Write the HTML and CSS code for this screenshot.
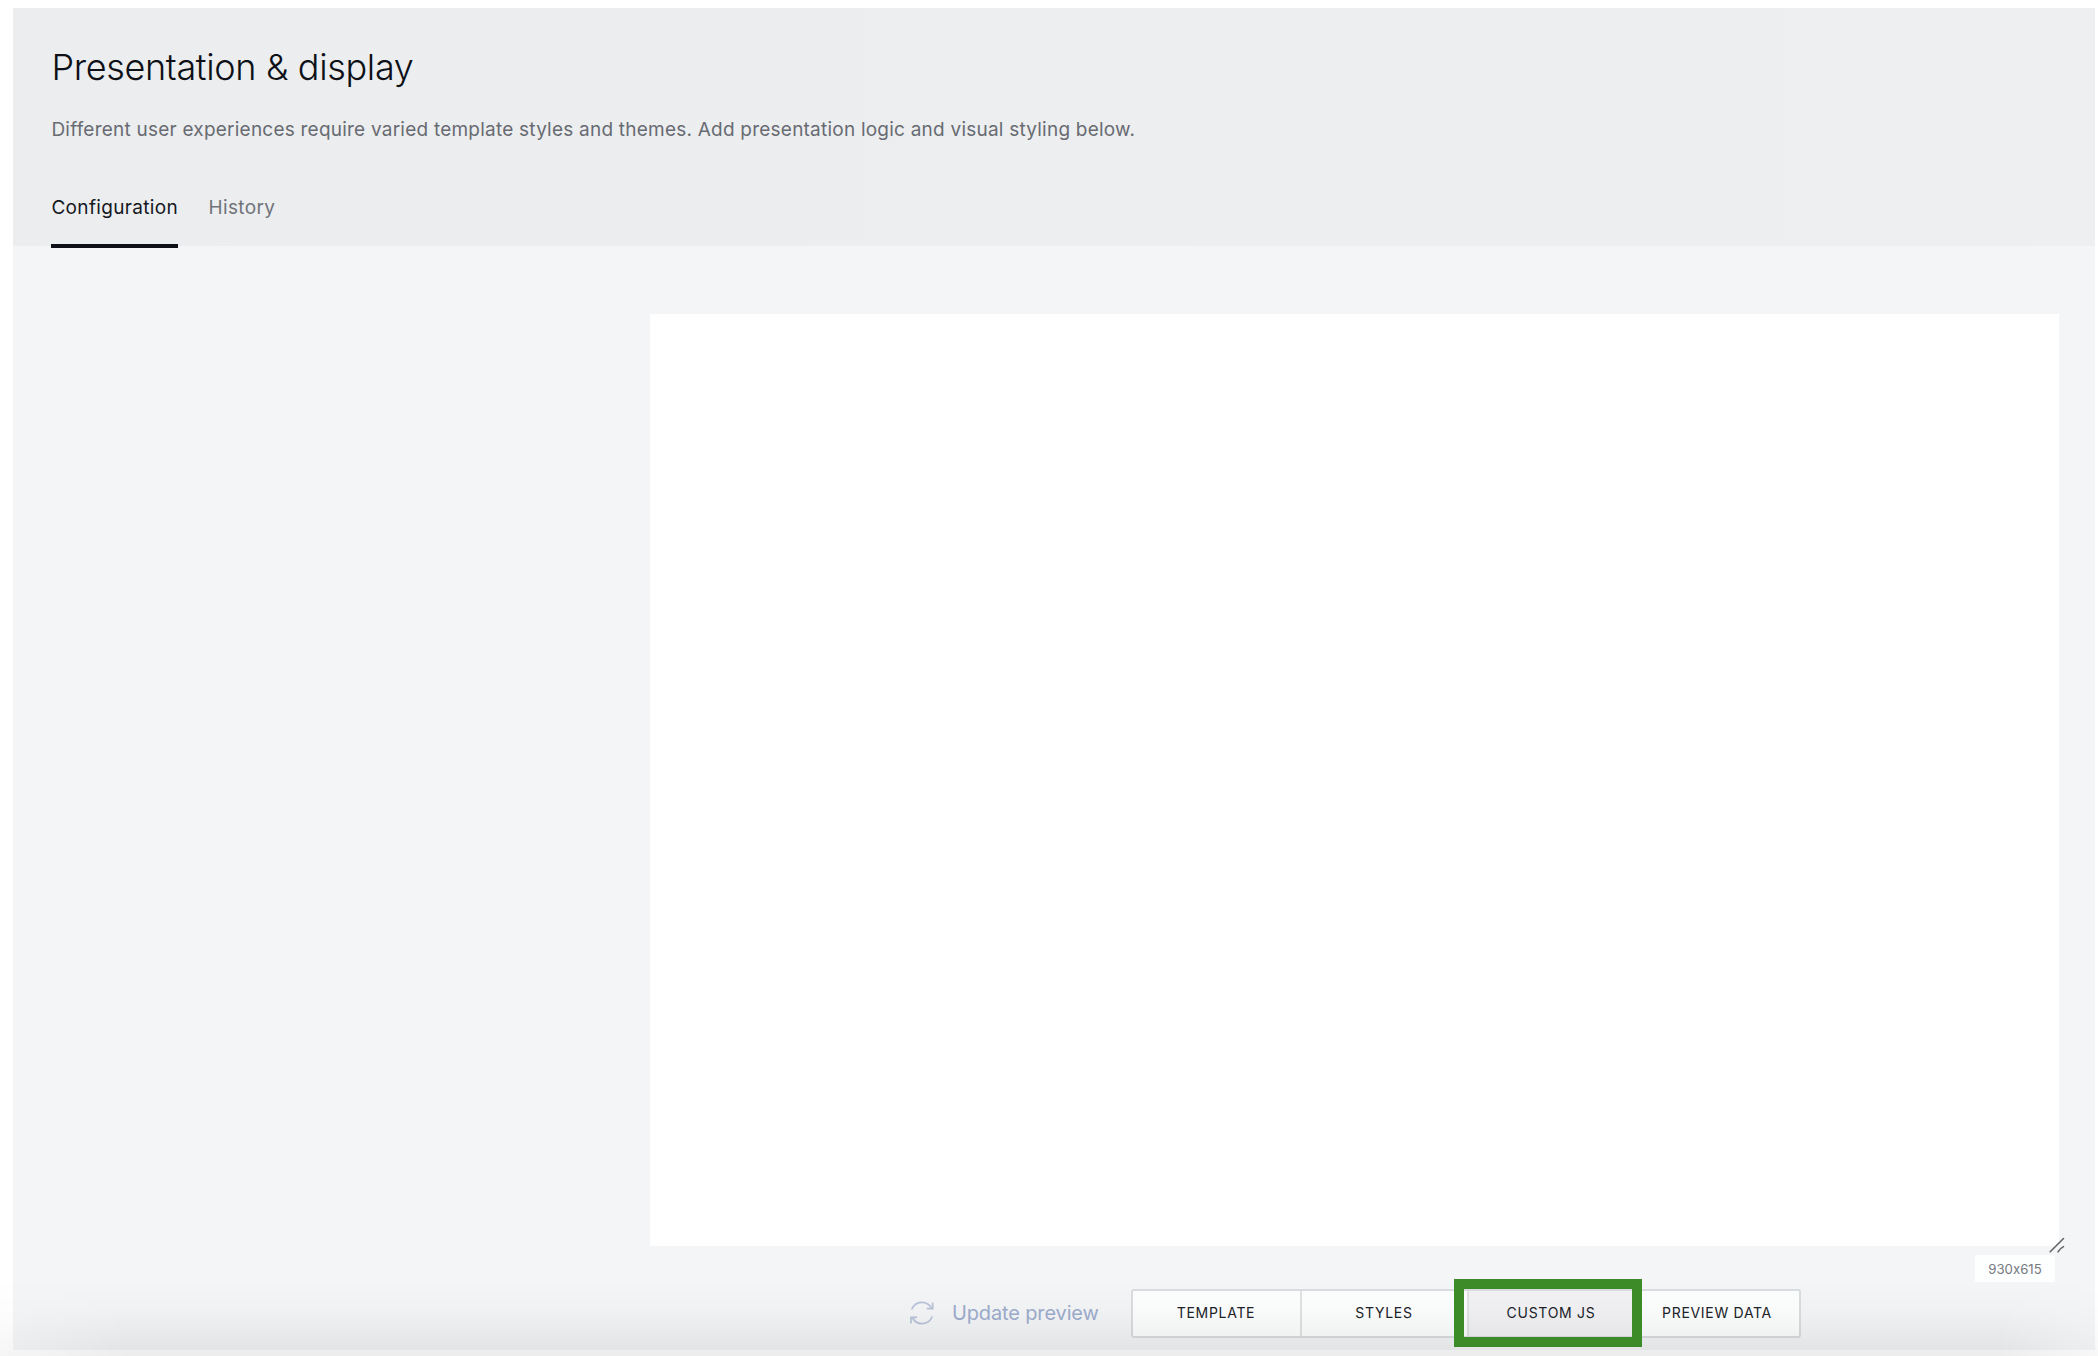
FILE: index.html
```html
<!DOCTYPE html>
<html lang="en">
<head>
<meta charset="utf-8">
<title>Presentation &amp; display</title>
<link rel="stylesheet" href="styles.css">
</head>
<body>
<main class="panel">
  <header class="header">
    <h1 class="title">Presentation &amp; display</h1>
    <p class="lead">Different user experiences require varied template styles and themes. Add presentation logic and visual styling below.</p>
    <nav class="tabs">
      <a class="tab tab-active">Configuration</a>
      <a class="tab">History</a>
    </nav>
  </header>
  <section class="workspace">
    <div class="preview">
      <svg class="resize" width="16" height="16" viewBox="0 0 16 16" fill="none" stroke="#666" stroke-width="1.6" stroke-linecap="round"><path d="M1.2 14.8 14.5 1.5M9 14.8c1.5-2.5 3-4 5.5-5.2"/></svg>
    </div>
    <div class="size">930x615</div>
    <div class="toolbar">
      <button class="update">
        <svg width="24" height="24" viewBox="0 0 24 24" fill="none" stroke="#b9c3d9" stroke-width="1.7"><path d="M1.7 8.5C5.5-.8 17.5-.8 21.8 7.5M22.7 1.6V7.6H16.7M22.3 15.5C18.5 24.8 6.5 24.8 2.2 16.5M1 22.6V16.4H7.1"/></svg>
        <span>Update preview</span>
      </button>
      <div class="segments">
        <button class="segment">TEMPLATE</button>
        <button class="segment">STYLES</button>
        <button class="segment segment-active">CUSTOM JS<span class="highlight"></span></button>
        <button class="segment">PREVIEW DATA</button>
      </div>
    </div>
  </section>
</main>
<div class="shade"></div>
</body>
</html>
```
FILE: styles.css
```css
* { box-sizing: border-box; }
body {
  margin: 0;
  height: 1356px;
  padding: 8px 3px 6px 13px;
  overflow: hidden;
  background: #fff;
  font-family: Inter, "Liberation Sans", sans-serif;
  font-feature-settings: "calt" 0;
}
button { border: 0; padding: 0; background: none; font: inherit; color: inherit; }
.panel { height: 1342px; background: #f4f5f7; }
.header {
  height: 238px;
  padding: 36px 38px 0 38.4px;
  background: linear-gradient(90deg, #ebedee, #eeeff1);
}
.title {
  margin: 0;
  font-size: 36px;
  font-weight: 350;
  line-height: 46px;
  letter-spacing: -.34px;
  color: #0d1017;
}
.lead {
  margin: 26px 0 0;
  font-size: 19px;
  font-weight: 370;
  line-height: 28px;
  letter-spacing: .225px;
  color: #686b72;
}
.tabs { display: flex; gap: 30.5px; margin-top: 46px; }
.tab {
  height: 58px;
  padding-top: 2px;
  font-size: 19px;
  font-weight: 370;
  line-height: 32px;
  letter-spacing: .34px;
  color: #70737a;
}
.tab-active { border-bottom: 4px solid #0d1017; color: #15181e; }
.workspace {
  display: flex;
  flex-direction: column;
  padding: 68px 36px 0 636.5px;
}
.preview { position: relative; height: 932px; background: #fff; }
.resize { position: absolute; right: -6px; bottom: -7px; }
.size {
  align-self: flex-end;
  width: 80px;
  height: 27px;
  margin: 9px 4px 0 0;
  background: #fdfefe;
  font-size: 13.2px;
  line-height: 29px;
  text-align: center;
  color: #777a82;
}
.toolbar { display: flex; align-items: center; margin: 7px 0 0 260px; }
.update {
  display: flex;
  align-items: center;
  gap: 18.5px;
  width: 221.5px;
  margin-top: -2px;
  color: #9dadcd;
  font-size: 20px;
  font-weight: 370;
  line-height: 26px;
  letter-spacing: -.14px;
  white-space: nowrap;
}
.segments {
  display: grid;
  grid-template-columns: 167px 167px 167px 165px;
  height: 49px;
  border: 2px solid #dadddf;
  border-radius: 3px;
  background: #fdfefe;
}
.segment {
  position: relative;
  padding: 0 1px 2px 0;
  font-size: 14px;
  letter-spacing: .7px;
  color: #202329;
}
.segment + .segment { border-left: 2px solid #e0e2e4; }
.segment-active { background: #f2f2f5; }
.highlight {
  position: absolute;
  z-index: 2;
  inset: -12px -8px -11px -15px;
  border: 10px solid #3d8b28;
}
.shade {
  position: fixed;
  inset: auto 0 0;
  height: 75px;
  background: linear-gradient(transparent, rgba(0, 0, 0, .015) 40%, rgba(0, 0, 0, .075));
  mask-image: linear-gradient(90deg, rgba(0, 0, 0, .5), #000 130px, #000 calc(100% - 100px), rgba(0, 0, 0, .4));
  pointer-events: none;
}
```
